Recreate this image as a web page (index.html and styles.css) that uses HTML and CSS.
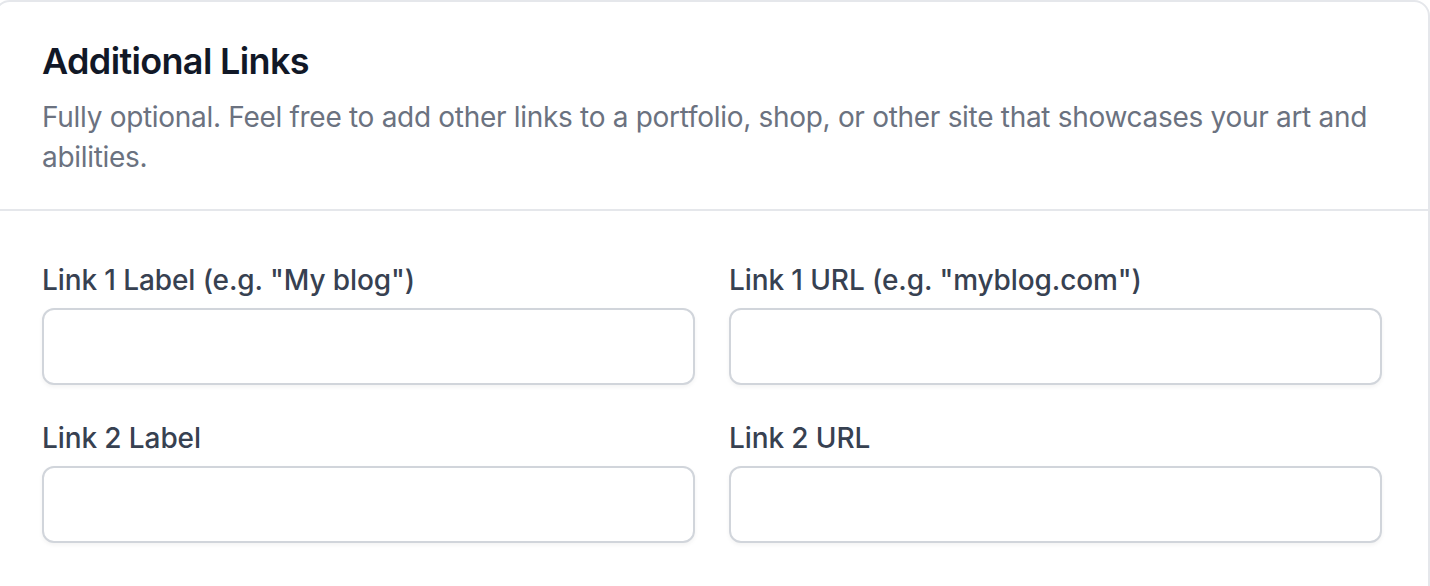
FILE: index.html
```html
<!DOCTYPE html>
<html lang="en">
<head>
<meta charset="utf-8">
<title>Additional Links</title>
<link rel="stylesheet" href="styles.css">
</head>
<body>
<div class="card">
  <div class="card-header">
    <h3 class="title">Additional Links</h3>
    <p class="desc">Fully optional. Feel free to add other links to a portfolio, shop, or other site that showcases your art and abilities.</p>
  </div>
  <div class="card-body">
    <div class="field">
      <label class="label" for="l1">Link 1 Label (e.g. "My blog")</label>
      <input class="input" id="l1" type="text">
    </div>
    <div class="field">
      <label class="label" for="u1">Link 1 URL (e.g. "myblog.com")</label>
      <input class="input" id="u1" type="text">
    </div>
    <div class="field">
      <label class="label" for="l2">Link 2 Label</label>
      <input class="input" id="l2" type="text">
    </div>
    <div class="field">
      <label class="label" for="u2">Link 2 URL</label>
      <input class="input" id="u2" type="text">
    </div>
  </div>
</div>
</body>
</html>
```

FILE: styles.css
```css
* { box-sizing: border-box; }
html, body {
  margin: 0;
  padding: 0;
  background: #ffffff;
  overflow: hidden;
  font-family: Inter, "Noto Sans", "Liberation Sans", sans-serif;
}
.card {
  margin-left: -6px;
  width: 1436px;
  min-height: 700px;
  background: #ffffff;
  border: 2px solid #e5e7eb;
  border-radius: 16px;
}
.card-header {
  padding: 35px 46px 32px;
  border-bottom: 2px solid #e5e7eb;
}
.title {
  margin: 0;
  font-size: 36px;
  line-height: 48px;
  font-weight: 600;
  letter-spacing: -0.65px;
  color: #111827;
}
.desc {
  margin: 12px 0 0;
  font-size: 28px;
  line-height: 40px;
  letter-spacing: -0.3px;
  color: #6b7280;
}
.card-body {
  padding: 49px 46px 40px;
  display: grid;
  grid-template-columns: 1fr 1fr;
  column-gap: 34px;
  row-gap: 33px;
}
.field {
  display: flex;
  flex-direction: column;
}
.label {
  font-size: 28px;
  line-height: 40px;
  font-weight: 500;
  letter-spacing: -0.1px;
  color: #374151;
}
.input {
  margin-top: 8px;
  height: 77px;
  border: 2px solid #d1d5db;
  border-radius: 12px;
  background: #ffffff;
  box-shadow: 0 2px 4px rgba(0, 0, 0, 0.05);
  font: inherit;
  font-size: 28px;
  padding: 0 24px;
  outline: none;
}
```
